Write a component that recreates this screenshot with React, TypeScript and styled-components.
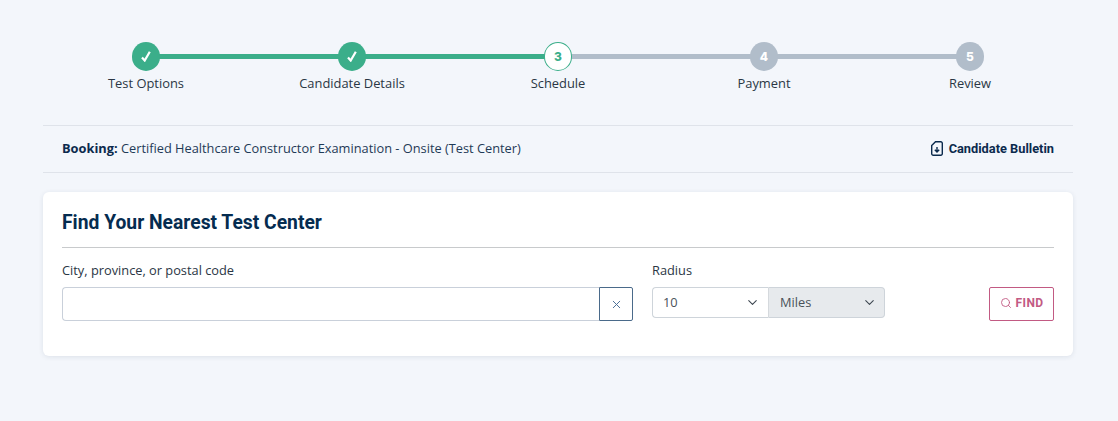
import React from 'react';
import styled, { createGlobalStyle } from 'styled-components';
import { ChevronDown, Search, X } from 'lucide-react';

const GlobalStyle = createGlobalStyle`
  html, body {
    margin: 0;
    padding: 0;
    background-color: #f3f6fb;
    font-family: "Open Sans", sans-serif;
    color: #1d2b3a;
  }
`;

const Page = styled.div`
  width: 1030px;
  height: 421px;
  margin-left: 43px;
  padding-top: 42px;
  box-sizing: border-box;
`;

const Stepper = styled.ol`
  display: grid;
  grid-template-columns: repeat(5, 1fr);
  list-style: none;
  margin: 0;
  padding: 0;
  height: 83px;
`;

const Step = styled.li<{ $lineColor?: string }>`
  position: relative;
  display: flex;
  flex-direction: column;
  align-items: center;

  &::after {
    content: ${(p) => (p.$lineColor ? "''" : 'none')};
    position: absolute;
    top: 12px;
    left: 50%;
    width: 100%;
    height: 5px;
    background-color: ${(p) => p.$lineColor};
  }
`;

const Circle = styled.div<{ $state: 'done' | 'current' | 'todo' }>`
  position: relative;
  z-index: 1;
  width: 28.8px;
  height: 29px;
  box-sizing: border-box;
  border-radius: 50%;
  display: flex;
  align-items: center;
  justify-content: center;
  font-family: "Inter", sans-serif;
  font-size: 12px;
  font-weight: 800;
  background-color: ${(p) =>
    p.$state === 'done' ? '#3bae8a' : p.$state === 'current' ? '#ffffff' : '#b1bdca'};
  color: ${(p) => (p.$state === 'current' ? '#3bae8a' : '#ffffff')};
  border: ${(p) => (p.$state === 'current' ? '1px solid #3bae8a' : 'none')};
`;

const StepLabel = styled.span`
  margin-top: 3px;
  font-size: 12.9px;
  line-height: 18px;
  color: #2a3644;
`;

const BookingBar = styled.div`
  display: flex;
  align-items: center;
  justify-content: space-between;
  height: 48px;
  padding: 0 19px 2px;
  box-sizing: border-box;
  border-top: 1px solid #dfe3ea;
  border-bottom: 1px solid #dfe3ea;
  font-size: 12.8px;
  color: #1f3a57;
`;

const BookingText = styled.div`
  strong {
    font-weight: 700;
    color: #0b2a4d;
  }
`;

const BulletinLink = styled.a`
  display: flex;
  align-items: center;
  gap: 6px;
  font-family: "Roboto", sans-serif;
  font-size: 12.8px;
  font-weight: 700;
  color: #0b2a4d;
`;

const Card = styled.section`
  margin-top: 19px;
  height: 164px;
  padding: 0 19px;
  box-sizing: border-box;
  background-color: #ffffff;
  border-radius: 6px;
  box-shadow: 0 1px 5px rgba(30, 50, 80, 0.1);
`;

const CardTitle = styled.h2`
  margin: 0;
  height: 56px;
  display: flex;
  align-items: center;
  padding-top: 6px;
  box-sizing: border-box;
  border-bottom: 1px solid #c8cacc;
  font-family: "Roboto", sans-serif;
  font-size: 19.3px;
  font-weight: 700;
  color: #052c50;
`;

const FormRow = styled.form`
  display: flex;
  align-items: flex-start;
  gap: 19px;
  margin-top: 13px;
`;

const Field = styled.div<{ $width: number }>`
  width: ${(p) => p.$width}px;
`;

const FieldLabel = styled.label`
  display: block;
  margin-bottom: 8px;
  font-size: 12.8px;
  line-height: 18px;
  color: #2a3644;
`;

const InputGroup = styled.div`
  display: flex;
  height: 34px;
`;

const TextInput = styled.input`
  flex: 1;
  min-width: 0;
  box-sizing: border-box;
  border: 1px solid #c9d0da;
  border-right: none;
  border-radius: 4px 0 0 4px;
  outline: none;
  background-color: #ffffff;
`;

const ClearButton = styled.button`
  width: 34px;
  padding: 0;
  display: flex;
  align-items: center;
  justify-content: center;
  background-color: #ffffff;
  border: 1px solid #4a6a8a;
  border-radius: 0 2px 2px 0;
  color: #4a6f96;
`;

const SelectGroup = styled.div`
  display: flex;
  height: 31px;
`;

const SelectWrap = styled.div<{ $width: number }>`
  position: relative;
  width: ${(p) => p.$width}px;

  svg {
    position: absolute;
    top: 8px;
    right: 8px;
    color: #3d4650;
    pointer-events: none;
  }
`;

const Select = styled.select<{ $side: 'left' | 'right' }>`
  appearance: none;
  width: 100%;
  height: 100%;
  padding: 0 0 2px ${(p) => (p.$side === 'left' ? 10 : 11)}px;
  box-sizing: border-box;
  font-family: "Open Sans", sans-serif;
  font-size: 12.8px;
  color: #4a5259;
  outline: none;
  border: 1px solid #ced4da;
  background-color: ${(p) => (p.$side === 'left' ? '#ffffff' : '#e7eaed')};
  border-radius: ${(p) => (p.$side === 'left' ? '4px 0 0 4px' : '0 4px 4px 0')};
  ${(p) => (p.$side === 'left' ? 'border-right: none;' : 'border-left: 1px solid #d5d9dd;')}
`;

const FindButton = styled.button`
  margin-left: auto;
  margin-top: 26px;
  width: 65px;
  height: 34px;
  padding: 0 0 2px;
  display: flex;
  align-items: center;
  justify-content: center;
  gap: 4px;
  background-color: #ffffff;
  border: 1px solid #c25a83;
  border-radius: 2px;
  font-family: "Roboto", sans-serif;
  font-size: 12px;
  font-weight: 700;
  letter-spacing: 0.4px;
  color: #c25a83;
`;

const steps = [
  { label: 'Test Options', state: 'done' },
  { label: 'Candidate Details', state: 'done' },
  { label: 'Schedule', state: 'current' },
  { label: 'Payment', state: 'todo' },
  { label: 'Review', state: 'todo' },
] as const;

const CheckMark = () => (
  <svg width="10" height="11" viewBox="0 0 10 11" fill="none" stroke="#ffffff" strokeWidth="2.2">
    <path d="M1 6.500L3.700 9.500L8.800 0.800" />
  </svg>
);

const BulletinIcon = () => (
  <svg width="12" height="15" viewBox="0 0 12 15" fill="none" stroke="#0b2a4d" strokeWidth="1.4">
    <path d="M4.500 0.700h5.300a1.500 1.500 0 0 1 1.500 1.500v10.600a1.500 1.500 0 0 1-1.500 1.500H2.200a1.500 1.500 0 0 1-1.500-1.500V4.500z" />
    <path d="M6 6v5M3.800 8.800L6 11l2.200-2.200" />
  </svg>
);

const App: React.FC = () => {
  return (
    <>
      <GlobalStyle />
      <Page>
        <Stepper>
          {steps.map((step, i) => (
            <Step
              key={step.label}
              $lineColor={
                i === steps.length - 1 ? undefined : step.state === 'done' ? '#3bae8a' : '#b1bdca'
              }
            >
              <Circle $state={step.state}>{step.state === 'done' ? <CheckMark /> : i + 1}</Circle>
              <StepLabel>{step.label}</StepLabel>
            </Step>
          ))}
        </Stepper>

        <BookingBar>
          <BookingText>
            <strong>Booking:</strong> Certified Healthcare Constructor Examination - Onsite (Test
            Center)
          </BookingText>
          <BulletinLink>
            <BulletinIcon />
            Candidate Bulletin
          </BulletinLink>
        </BookingBar>

        <Card>
          <CardTitle>Find Your Nearest Test Center</CardTitle>
          <FormRow>
            <Field $width={571}>
              <FieldLabel>City, province, or postal code</FieldLabel>
              <InputGroup>
                <TextInput type="text" />
                <ClearButton type="button">
                  <X size={13} strokeWidth={1.8} />
                </ClearButton>
              </InputGroup>
            </Field>
            <Field $width={233}>
              <FieldLabel>Radius</FieldLabel>
              <SelectGroup>
                <SelectWrap $width={116}>
                  <Select $side="left" defaultValue="10">
                    <option>10</option>
                  </Select>
                  <ChevronDown size={15} strokeWidth={1.7} />
                </SelectWrap>
                <SelectWrap $width={117}>
                  <Select $side="right" defaultValue="Miles">
                    <option>Miles</option>
                  </Select>
                  <ChevronDown size={15} strokeWidth={1.7} />
                </SelectWrap>
              </SelectGroup>
            </Field>
            <FindButton type="button">
              <Search size={12} strokeWidth={1.8} />
              FIND
            </FindButton>
          </FormRow>
        </Card>
      </Page>
    </>
  );
};

export default App;
